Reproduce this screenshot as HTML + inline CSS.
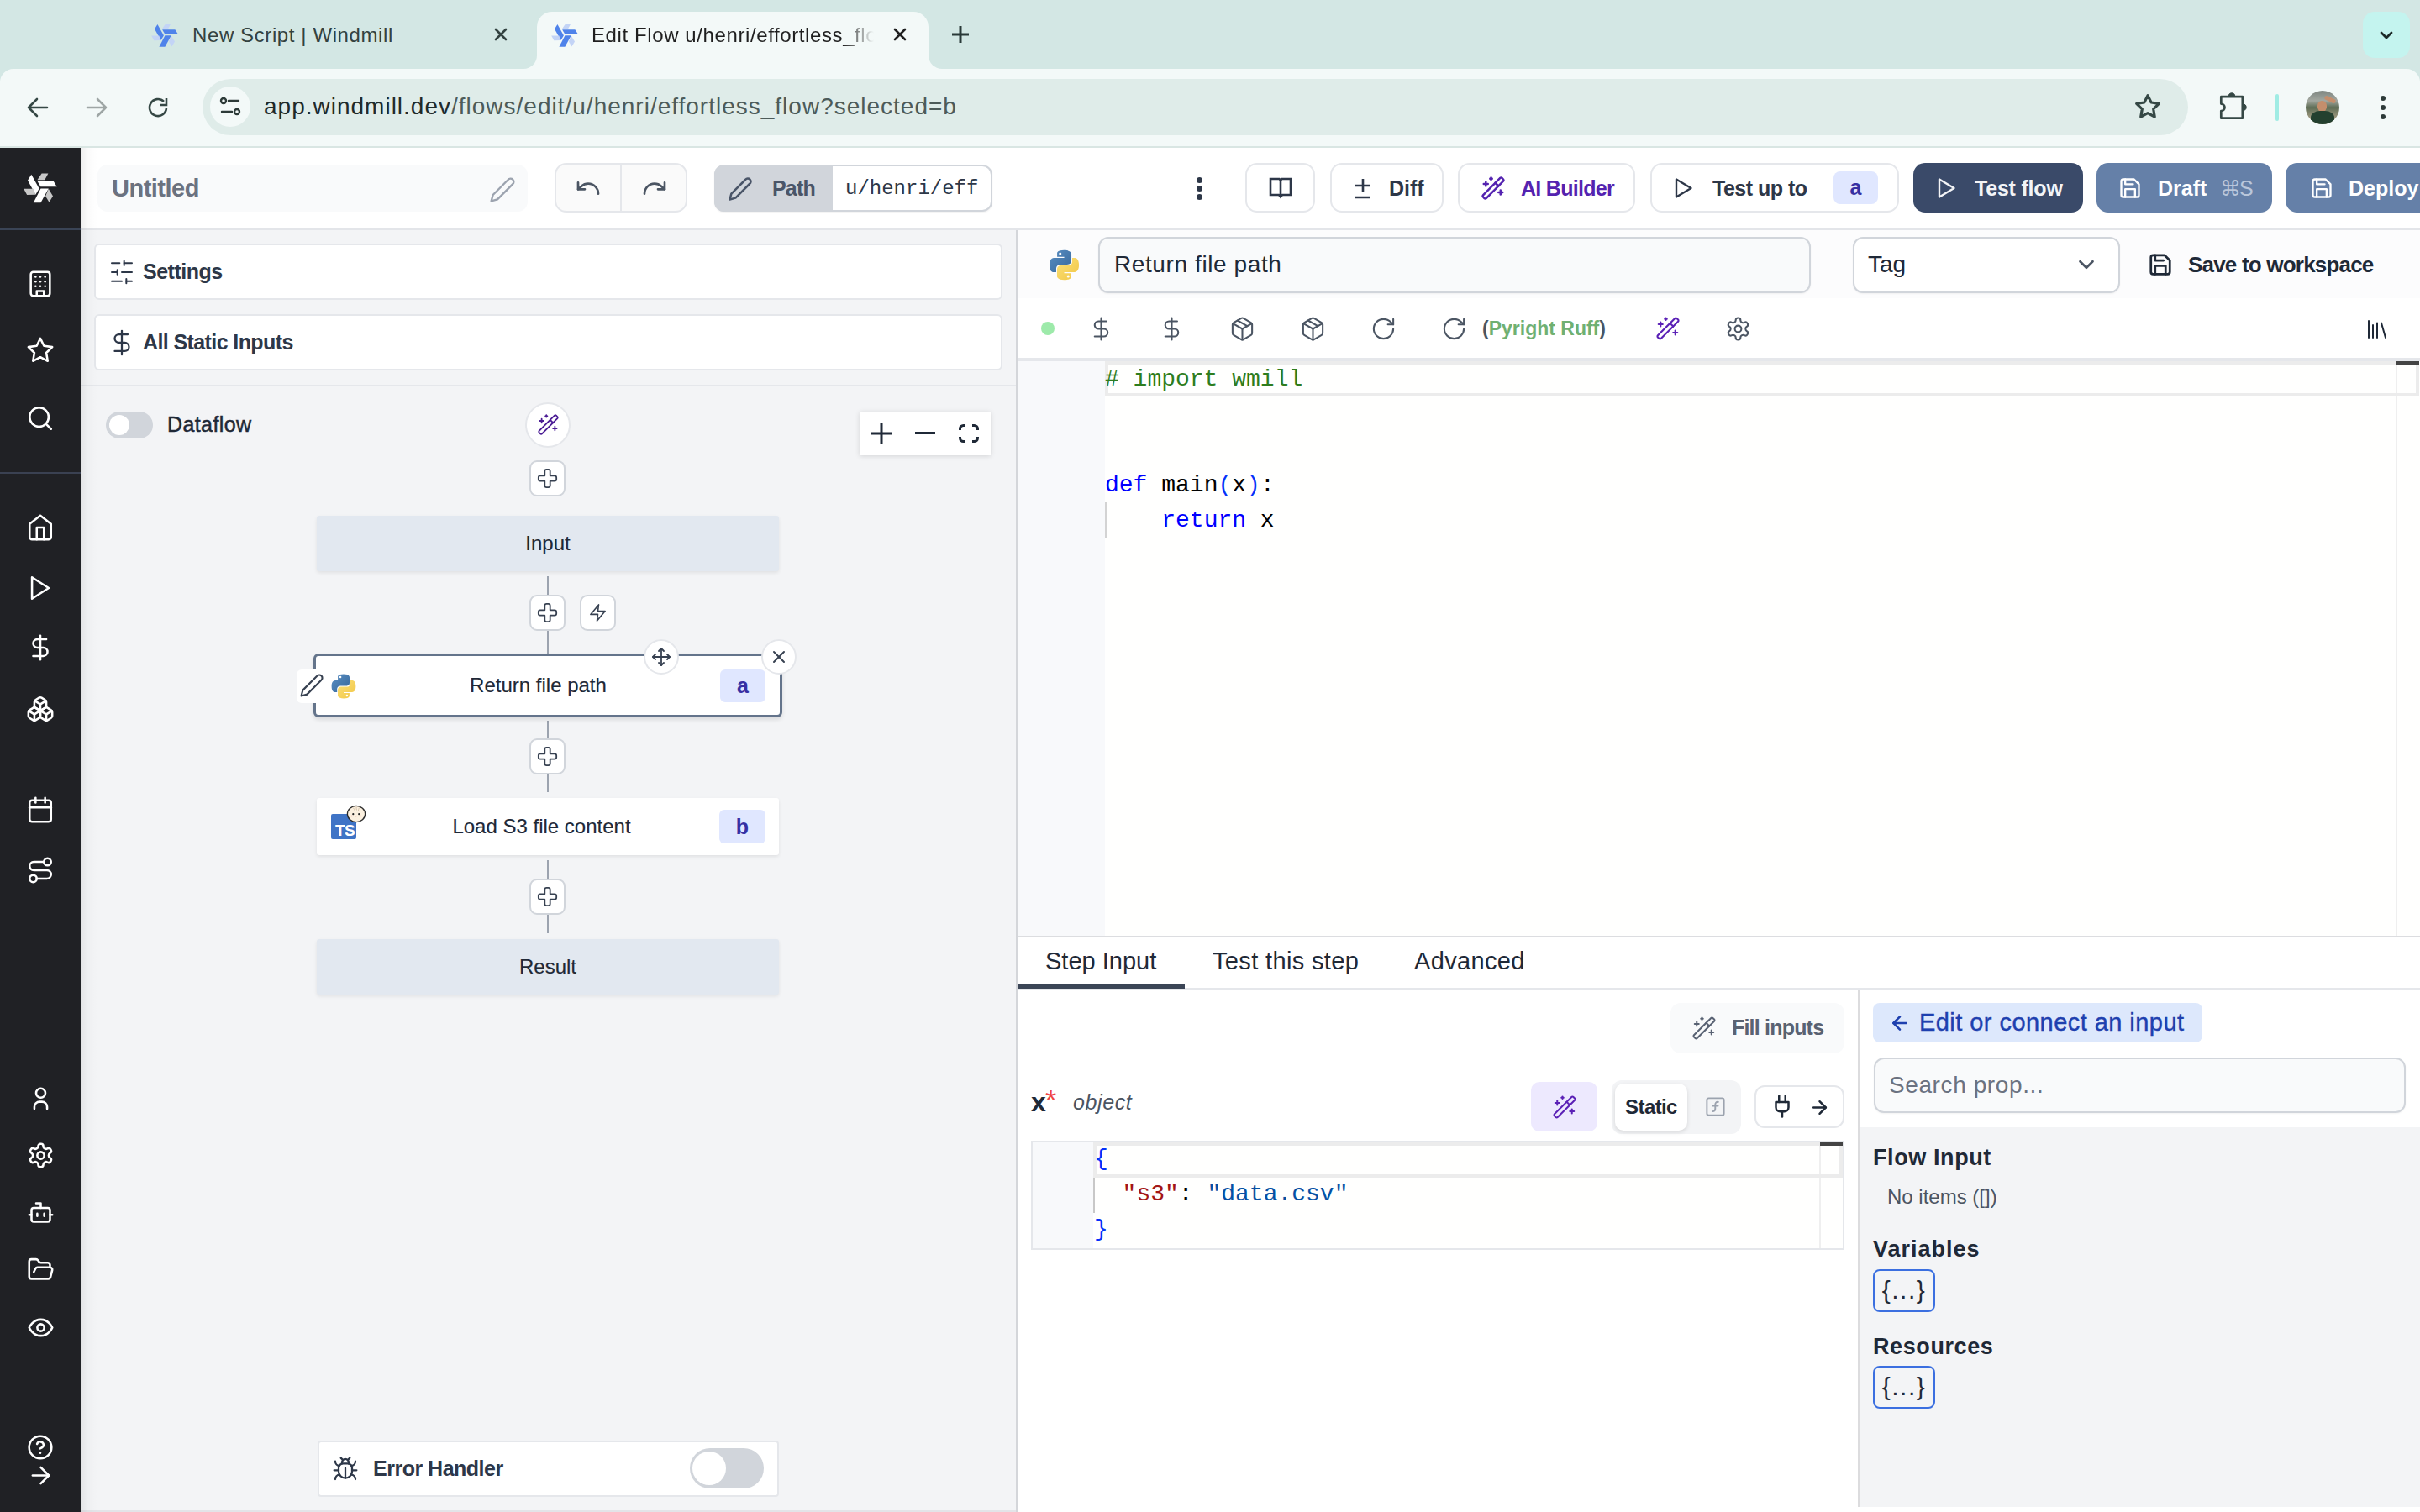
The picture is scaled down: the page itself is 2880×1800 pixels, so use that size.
<!DOCTYPE html>
<html><head><meta charset="utf-8">
<style>
*{box-sizing:border-box}
html,body{margin:0;padding:0}
body{width:2880px;height:1800px;overflow:hidden;position:relative;font-family:"Liberation Sans",sans-serif;background:#fff;color:#2d3748}
.a{position:absolute}
svg.i{fill:none;stroke:currentColor;stroke-width:2;stroke-linecap:round;stroke-linejoin:round;position:absolute;overflow:visible}
.t{position:absolute;white-space:nowrap}
.mono{font-family:"Liberation Mono",monospace}
@media (max-width:2000px){html{zoom:0.5}}
</style></head><body>
<svg width="0" height="0" style="position:absolute">
<defs>
<symbol id="wm" viewBox="0 0 32 32">
<polygon points="7.45,3 4,8.6 11.45,22.1 14.9,16.3" fill="#4f83ea"/>
<polygon points="13.1,9.2 28.4,9.2 31.8,14.6 16.2,14.6" fill="#4f83ea"/>
<polygon points="16.4,16.3 23.8,16.3 16.4,29.7 9.45,29.7" fill="#4f83ea"/>
<polygon points="17.3,1.9 23.5,1.9 20.2,8.1 13.1,8.1" fill="#c3d4f6"/>
<polygon points="0.2,16.5 9.3,16.5 11.45,22.1 3.3,22.3" fill="#c3d4f6"/>
<polygon points="23.8,16.6 28,23.5 24.4,29.4 20.9,23.5" fill="#c3d4f6"/>
</symbol>
<linearGradient id="pyb" x1="0" y1="0" x2="1" y2="1"><stop offset="0" stop-color="#5a8fc4"/><stop offset="1" stop-color="#36679a"/></linearGradient><linearGradient id="pyy" x1="0" y1="0" x2="1" y2="1"><stop offset="0" stop-color="#fbe07a"/><stop offset="1" stop-color="#f1c644"/></linearGradient>
<symbol id="py" viewBox="0 0 32 32">
<path d="M15.9 1.5c-7.3 0-6.8 3.2-6.8 3.2v3.3h6.9v1H6.3S1.6 8.5 1.6 15.9s4.1 7.1 4.1 7.1h2.5v-3.4s-.1-4.1 4-4.1h6.9s3.9.1 3.9-3.8V5.4s.6-3.9-7.1-3.9zm-3.8 2.2a1.25 1.25 0 1 1 0 2.5 1.25 1.25 0 0 1 0-2.5z" fill="url(#pyb)"/>
<path d="M16.1 30.5c7.3 0 6.8-3.2 6.8-3.2v-3.3h-6.9v-1h9.7s4.7.5 4.7-6.9-4.1-7.1-4.1-7.1h-2.5v3.4s.1 4.1-4 4.1h-6.9s-3.9-.1-3.9 3.8v6.3s-.6 3.9 7.1 3.9zm3.8-2.2a1.25 1.25 0 1 1 0-2.5 1.25 1.25 0 0 1 0 2.5z" fill="url(#pyy)"/>
</symbol>
</defs>
</svg>
<!-- CHROME TAB BAR -->
<div class="a" style="left:0;top:0;width:2880px;height:110px;background:#d3e7e4"></div>
<!-- active tab -->
<div class="a" style="left:623px;top:50px;width:32px;height:32px;background:#f3f9f8"></div>
<div class="a" style="left:607px;top:34px;width:32px;height:48px;background:#d3e7e4;border-radius:0 0 16px 0"></div>
<div class="a" style="left:1089px;top:50px;width:32px;height:32px;background:#f3f9f8"></div>
<div class="a" style="left:1105px;top:34px;width:32px;height:48px;background:#d3e7e4;border-radius:0 0 0 16px"></div>
<div class="a" style="left:639px;top:14px;width:466px;height:70px;background:#f3f9f8;border-radius:18px 18px 0 0"></div>
<svg class="a" style="left:180px;top:26px" width="32" height="32"><use href="#wm"/></svg>
<div class="t" style="left:229px;top:26px;font-size:24px;line-height:32px;color:#334240;letter-spacing:0.6px">New Script | Windmill</div>
<svg class="i" style="left:584px;top:29px;color:#334240;stroke-width:2.6" width="24" height="24" viewBox="0 0 24 24"><path d="M6 6 18 18M18 6 6 18"/></svg>
<svg class="a" style="left:656px;top:26px" width="32" height="32"><use href="#wm"/></svg>
<div class="t" style="left:704px;top:26px;font-size:24px;line-height:32px;color:#1f1f1f;width:336px;overflow:hidden;letter-spacing:0.6px;-webkit-mask-image:linear-gradient(90deg,#000 89%,transparent)">Edit Flow u/henri/effortless_flow</div>
<svg class="i" style="left:1059px;top:29px;color:#1f1f1f;stroke-width:2.6" width="24" height="24" viewBox="0 0 24 24"><path d="M6 6 18 18M18 6 6 18"/></svg>
<svg class="i" style="left:1129px;top:27px;color:#2a3a38;stroke-width:3;stroke-linecap:butt" width="28" height="28" viewBox="0 0 28 28"><path d="M14 4v20M4 14h20"/></svg>
<div class="a" style="left:2812px;top:14px;width:56px;height:55px;background:#c4f4ef;border-radius:14px"></div>
<svg class="i" style="left:2826px;top:28px;color:#1c2a28;stroke-width:2.8" width="28" height="28" viewBox="0 0 28 28"><path d="M8 11l6 6 6-6"/></svg>
<!-- TOOLBAR -->
<div class="a" style="left:0;top:82px;width:2880px;height:92px;background:#f3f9f8;border-radius:16px 16px 0 0"></div>
<div class="a" style="left:0;top:174px;width:2880px;height:2px;background:#d9e6e3"></div>
<svg class="i" style="left:30px;top:114px;color:#354845;stroke-width:2.6" width="28" height="28" viewBox="0 0 28 28"><path d="M26 14H4M14 4 4 14l10 10"/></svg>
<svg class="i" style="left:102px;top:114px;color:#9ea6a5;stroke-width:2.6" width="28" height="28" viewBox="0 0 28 28"><path d="M2 14h22M14 4l10 10-10 10"/></svg>
<svg class="i" style="left:174px;top:114px;color:#354845;stroke-width:2.6" width="28" height="28" viewBox="0 0 28 28"><path d="M24 14a10 10 0 1 1-3-7.1" stroke-linecap="butt"/><path d="M24 3v8h-8" stroke-linecap="butt" stroke-linejoin="miter"/></svg>
<div class="a" style="left:241px;top:94px;width:2363px;height:67px;background:#dfece9;border-radius:34px"></div>
<div class="a" style="left:250px;top:103px;width:48px;height:48px;background:#f3f9f8;border-radius:50%"></div>
<svg class="i" style="left:260px;top:113px;color:#2c3a38;stroke-width:2.4" width="28" height="28" viewBox="0 0 28 28"><circle cx="6" cy="7" r="3"/><path d="M12 7h12M4 20h12"/><circle cx="22" cy="20" r="3"/></svg>
<div class="t" style="left:314px;top:110px;font-size:28px;line-height:34px;color:#1f2a29;letter-spacing:1px">app.windmill.dev<span style="color:#4d5b59">/flows/edit/u/henri/effortless_flow?selected=b</span></div>
<svg class="i" style="left:2540px;top:111px;color:#354845;stroke-width:2.4" width="32" height="32" viewBox="0 0 24 24"><polygon points="12 2 15.09 8.26 22 9.27 17 14.14 18.18 21.02 12 17.77 5.82 21.02 7 14.14 2 9.27 8.91 8.26 12 2"/></svg>
<svg class="i" style="left:2638px;top:106px;color:#354845;stroke-width:2.7" width="40" height="40" viewBox="0 0 40 40"><path d="M5.3 9.2H30.8V34.7H5.3V26A4.2 4.2 0 0 0 5.3 17.6Z"/><path d="M14.3 8.5A3.7 3.7 0 0 1 21.7 8.5Z" fill="#354845" stroke-width="1"/><path d="M31.5 18A3.7 3.7 0 0 1 31.5 25.4Z" fill="#354845" stroke-width="1"/></svg>
<div class="a" style="left:2708px;top:112px;width:4px;height:32px;background:#a0ece4;border-radius:2px"></div>
<div class="a" style="left:2744px;top:108px;width:40px;height:40px;border-radius:50%;overflow:hidden;background:linear-gradient(180deg,#7d8580 0,#a3a8a0 30%,#5e6d55 50%,#c8b59a 100%)">
<div class="a" style="left:14px;top:12px;width:11px;height:13px;border-radius:45%;background:#c48e6c"></div>
<div class="a" style="left:6px;top:24px;width:28px;height:20px;border-radius:40% 40% 0 0;background:#23402f"></div>
<div class="a" style="left:22px;top:8px;width:14px;height:5px;border-radius:3px;background:#c48e6c;transform:rotate(25deg)"></div>
</div>
<div class="a" style="left:2833px;top:114px;width:6px;height:6px;border-radius:50%;background:#2c3a38"></div>
<div class="a" style="left:2833px;top:125px;width:6px;height:6px;border-radius:50%;background:#2c3a38"></div>
<div class="a" style="left:2833px;top:136px;width:6px;height:6px;border-radius:50%;background:#2c3a38"></div>

<!-- SIDEBAR -->
<div class="a" style="left:0;top:176px;width:96px;height:1624px;background:#202125"></div>
<svg class="a" style="left:28px;top:204px" width="40" height="40" viewBox="0 0 32 32">
<polygon points="7.45,3 4,8.6 11.45,22.1 14.9,16.3" fill="#fff"/>
<polygon points="13.1,9.2 28.4,9.2 31.8,14.6 16.2,14.6" fill="#fff"/>
<polygon points="16.4,16.3 23.8,16.3 16.4,29.7 9.45,29.7" fill="#fff"/>
<polygon points="17.3,1.9 23.5,1.9 20.2,8.1 13.1,8.1" fill="#c8c8c8"/>
<polygon points="0.2,16.5 9.3,16.5 11.45,22.1 3.3,22.3" fill="#c8c8c8"/>
<polygon points="23.8,16.6 28,23.5 24.4,29.4 20.9,23.5" fill="#c8c8c8"/>
</svg>
<div class="a" style="left:0;top:272px;width:96px;height:2px;background:#3a4456"></div>
<div class="a" style="left:0;top:562px;width:96px;height:2px;background:#3a4152"></div>

<!-- sidebar icons -->
<svg class="i" style="left:31.0px;top:321.0px;color:#fff;stroke-width:1.80" width="34" height="34" viewBox="0 0 24 24"><rect width="16" height="20" x="4" y="2" rx="2" ry="2"/><path d="M9 22v-4h6v4"/><path d="M8 6h.01"/><path d="M16 6h.01"/><path d="M12 6h.01"/><path d="M12 10h.01"/><path d="M12 14h.01"/><path d="M16 10h.01"/><path d="M16 14h.01"/><path d="M8 10h.01"/><path d="M8 14h.01"/></svg>
<svg class="i" style="left:31.0px;top:400.0px;color:#fff;stroke-width:1.80" width="34" height="34" viewBox="0 0 24 24"><polygon points="12 2 15.09 8.26 22 9.27 17 14.14 18.18 21.02 12 17.77 5.82 21.02 7 14.14 2 9.27 8.91 8.26 12 2"/></svg>
<svg class="i" style="left:31.0px;top:481.0px;color:#fff;stroke-width:1.80" width="34" height="34" viewBox="0 0 24 24"><circle cx="11" cy="11" r="8"/><path d="m21 21-4.3-4.3"/></svg>
<svg class="i" style="left:31.0px;top:611.0px;color:#fff;stroke-width:1.80" width="34" height="34" viewBox="0 0 24 24"><path d="m3 9 9-7 9 7v11a2 2 0 0 1-2 2H5a2 2 0 0 1-2-2z"/><polyline points="9 22 9 12 15 12 15 22"/></svg>
<svg class="i" style="left:31.0px;top:683.0px;color:#fff;stroke-width:1.80" width="34" height="34" viewBox="0 0 24 24"><polygon points="5 3 19 12 5 21 5 3"/></svg>
<svg class="i" style="left:31.0px;top:754.0px;color:#fff;stroke-width:1.80" width="34" height="34" viewBox="0 0 24 24"><line x1="12" x2="12" y1="2" y2="22"/><path d="M17 5H9.5a3.5 3.5 0 0 0 0 7h5a3.5 3.5 0 0 1 0 7H6"/></svg>
<svg class="i" style="left:31.0px;top:827.0px;color:#fff;stroke-width:1.80" width="34" height="34" viewBox="0 0 24 24"><path d="M2.97 12.92A2 2 0 0 0 2 14.63v3.24a2 2 0 0 0 .97 1.71l3 1.8a2 2 0 0 0 2.06 0L12 19v-5.5l-5-3-4.03 2.42Z"/><path d="m7 16.5-4.74-2.85"/><path d="m7 16.5 5-3"/><path d="M7 16.5v5.17"/><path d="M12 13.5V19l3.97 2.38a2 2 0 0 0 2.06 0l3-1.8a2 2 0 0 0 .97-1.71v-3.24a2 2 0 0 0-.97-1.71L17 10.5l-5 3Z"/><path d="m17 16.5-5-3"/><path d="m17 16.5 4.74-2.85"/><path d="M17 16.5v5.17"/><path d="M7.97 4.42A2 2 0 0 0 7 6.13v4.37l5 3 5-3V6.13a2 2 0 0 0-.97-1.71l-3-1.8a2 2 0 0 0-2.06 0l-3 1.8Z"/><path d="M12 8 7.26 5.15"/><path d="m12 8 4.74-2.85"/><path d="M12 13.5V8"/></svg>
<svg class="i" style="left:31.0px;top:947.0px;color:#fff;stroke-width:1.80" width="34" height="34" viewBox="0 0 24 24"><rect width="18" height="18" x="3" y="4" rx="2" ry="2"/><line x1="16" x2="16" y1="2" y2="6"/><line x1="8" x2="8" y1="2" y2="6"/><line x1="3" x2="21" y1="10" y2="10"/></svg>
<svg class="i" style="left:31.0px;top:1019.0px;color:#fff;stroke-width:1.80" width="34" height="34" viewBox="0 0 24 24"><circle cx="6" cy="19" r="3"/><path d="M9 19h8.5a3.5 3.5 0 0 0 0-7h-11a3.5 3.5 0 0 1 0-7H15"/><circle cx="18" cy="5" r="3"/></svg>
<svg class="i" style="left:31.5px;top:1290.5px;color:#fff;stroke-width:1.86" width="33" height="33" viewBox="0 0 24 24"><circle cx="12" cy="7.5" r="4"/><path d="M6.5 21v-1.5a4.5 4.5 0 0 1 4.5-4.5h2a4.5 4.5 0 0 1 4.5 4.5V21"/></svg>
<svg class="i" style="left:31.5px;top:1358.5px;color:#fff;stroke-width:1.86" width="33" height="33" viewBox="0 0 24 24"><path d="M12.22 2h-.44a2 2 0 0 0-2 2v.18a2 2 0 0 1-1 1.73l-.43.25a2 2 0 0 1-2 0l-.15-.08a2 2 0 0 0-2.73.73l-.22.38a2 2 0 0 0 .73 2.73l.15.1a2 2 0 0 1 1 1.72v.51a2 2 0 0 1-1 1.74l-.15.09a2 2 0 0 0-.73 2.73l.22.38a2 2 0 0 0 2.73.73l.15-.08a2 2 0 0 1 2 0l.43.25a2 2 0 0 1 1 1.73V20a2 2 0 0 0 2 2h.44a2 2 0 0 0 2-2v-.18a2 2 0 0 1 1-1.73l.43-.25a2 2 0 0 1 2 0l.15.08a2 2 0 0 0 2.730-.73l.22-.39a2 2 0 0 0-.73-2.73l-.15-.08a2 2 0 0 1-1-1.74v-.5a2 2 0 0 1 1-1.74l.15-.09a2 2 0 0 0 .73-2.73l-.22-.38a2 2 0 0 0-2.73-.73l-.15.08a2 2 0 0 1-2 0l-.43-.25a2 2 0 0 1-1-1.73V4a2 2 0 0 0-2-2z"/><circle cx="12" cy="12" r="3"/></svg>
<svg class="i" style="left:31.5px;top:1426.5px;color:#fff;stroke-width:1.86" width="33" height="33" viewBox="0 0 24 24"><path d="M12 8V4H8"/><rect width="16" height="12" x="4" y="8" rx="2"/><path d="M2 14h2"/><path d="M20 14h2"/><path d="M15 13v2"/><path d="M9 13v2"/></svg>
<svg class="i" style="left:31.5px;top:1494.5px;color:#fff;stroke-width:1.86" width="33" height="33" viewBox="0 0 24 24"><path d="m6 14 1.45-2.9A2 2 0 0 1 9.24 10H20a2 2 0 0 1 1.94 2.5l-1.55 6a2 2 0 0 1-1.94 1.5H4a2 2 0 0 1-2-2V5c0-1.1.9-2 2-2h3.930a2 2 0 0 1 1.66.9l.82 1.2a2 2 0 0 0 1.66.9H18a2 2 0 0 1 2 2v2"/></svg>
<svg class="i" style="left:31.5px;top:1563.5px;color:#fff;stroke-width:1.86" width="33" height="33" viewBox="0 0 24 24"><path d="M2 12s3-7 10-7 10 7 10 7-3 7-10 7-10-7-10-7Z"/><circle cx="12" cy="12" r="3"/></svg>
<svg class="i" style="left:32.0px;top:1707.0px;color:#fff;stroke-width:1.91" width="32" height="32" viewBox="0 0 24 24"><circle cx="12" cy="12" r="10"/><path d="M9.09 9a3 3 0 0 1 5.83 1c0 2-3 3-3 3"/><path d="M12 17h.01"/></svg>
<svg class="i" style="left:31.5px;top:1739.5px;color:#fff;stroke-width:1.86" width="33" height="33" viewBox="0 0 24 24"><path d="M5 12h14"/><path d="m12 5 7 7-7 7"/></svg>
<!-- HEADER -->
<div class="a" style="left:96px;top:176px;width:2784px;height:98px;background:#fff;border-bottom:2px solid #e3e5e9"></div>
<div class="a" style="left:116px;top:196px;width:512px;height:56px;background:#f9fafb;border-radius:12px"></div>
<div class="t" style="left:133px;top:206px;font-size:29px;line-height:36px;font-weight:bold;color:#6b7280;letter-spacing:-0.5px">Untitled</div>
<svg class="i" style="left:582px;top:210px;color:#9ca3af;stroke-width:1.8" width="32" height="32" viewBox="0 0 24 24"><path d="M17 3a2.85 2.83 0 1 1 4 4L7.5 20.5 2 22l1.5-5.5Z"/></svg>
<div class="a" style="left:660px;top:194px;width:158px;height:59px;background:#fafafa;border:2px solid #e5e7eb;border-radius:14px"></div>
<div class="a" style="left:738px;top:196px;width:2px;height:55px;background:#e5e7eb"></div>
<svg class="i" style="left:684px;top:208px;color:#4b5563;stroke-width:2" width="32" height="32" viewBox="0 0 24 24"><path d="M3 7v6h6"/><path d="M21 17a9 9 0 0 0-9-9 9 9 0 0 0-6 2.3L3 13"/></svg>
<svg class="i" style="left:763px;top:208px;color:#4b5563;stroke-width:2" width="32" height="32" viewBox="0 0 24 24"><path d="M21 7v6h-6"/><path d="M3 17a9 9 0 0 1 9-9 9 9 0 0 1 6 2.3l3 2.7"/></svg>
<div class="a" style="left:850px;top:196px;width:331px;height:56px;background:#fff;border:2px solid #d1d5db;border-radius:12px;box-shadow:0 1px 2px rgba(0,0,0,0.06)"></div>
<div class="a" style="left:850px;top:196px;width:141px;height:56px;background:#d1d5db;border-radius:12px 0 0 12px"></div>
<svg class="i" style="left:866px;top:210px;color:#4a5568;stroke-width:2" width="30" height="30" viewBox="0 0 24 24"><path d="M17 3a2.85 2.83 0 1 1 4 4L7.5 20.5 2 22l1.5-5.5Z"/></svg>
<div class="t" style="left:919px;top:206px;font-size:25px;line-height:36px;font-weight:bold;color:#4a5568;letter-spacing:-0.8px">Path</div>
<div class="t mono" style="left:1006px;top:206px;font-size:24px;line-height:36px;color:#2d3748;top:207px">u/henri/eff</div>
<div class="a" style="left:1424px;top:211px;width:7px;height:7px;border-radius:50%;background:#2d3748"></div>
<div class="a" style="left:1424px;top:221px;width:7px;height:7px;border-radius:50%;background:#2d3748"></div>
<div class="a" style="left:1424px;top:231px;width:7px;height:7px;border-radius:50%;background:#2d3748"></div>

<div class="a" style="left:1482px;top:194px;width:83px;height:59px;border:2px solid #e5e7eb;border-radius:14px;background:#fff"></div>
<svg class="i" style="left:1510px;top:210px;color:#2d3748;stroke-width:2.6;stroke-linecap:butt;stroke-linejoin:miter" width="28" height="28" viewBox="0 0 28 28"><path d="M2 3h10.5l1.5 1.5 1.5-1.5H26v19H16l-2 2.5-2-2.5H2z"/><path d="M14 4.5V23"/></svg>
<div class="a" style="left:1583px;top:194px;width:135px;height:59px;border:2px solid #e5e7eb;border-radius:14px;background:#fff"></div>
<svg class="i" style="left:1608px;top:210px;color:#2d3748;stroke-width:2.6;stroke-linecap:butt" width="28" height="28" viewBox="0 0 28 28"><path d="M14 3v16M5 11h18M5 25h18"/></svg>
<div class="t" style="left:1653px;top:206px;font-size:25px;line-height:36px;font-weight:bold;color:#2d3748">Diff</div>
<div class="a" style="left:1735px;top:194px;width:211px;height:59px;border:2px solid #e5e7eb;border-radius:14px;background:#fff"></div>
<svg class="i" style="left:1762px;top:209px;color:#5423b0;stroke-width:2" width="30" height="30" viewBox="0 0 24 24"><path d="m21.64 3.64-1.28-1.28a1.21 1.21 0 0 0-1.72 0L2.36 18.64a1.21 1.21 0 0 0 0 1.72l1.28 1.28a1.2 1.2 0 0 0 1.72 0L21.64 5.36a1.2 1.2 0 0 0 0-1.72"/><path d="m14 7 3 3"/><path d="M5 6v4"/><path d="M19 14v4"/><path d="M10 2v2"/><path d="M7 8H3"/><path d="M21 16h-4"/><path d="M11 3H9"/></svg>
<div class="t" style="left:1810px;top:206px;font-size:25px;line-height:36px;font-weight:bold;color:#5423b0;letter-spacing:-0.7px">AI Builder</div>
<div class="a" style="left:1964px;top:194px;width:296px;height:59px;border:2px solid #e5e7eb;border-radius:14px;background:#fff"></div>
<svg class="i" style="left:1990px;top:210px;color:#2d3748;stroke-width:2.4" width="28" height="28" viewBox="0 0 28 28"><path d="M5 3.5 22.5 14 5 24.5z"/></svg>
<div class="t" style="left:2038px;top:206px;font-size:25px;line-height:36px;font-weight:bold;color:#2d3748;letter-spacing:-0.5px">Test up to</div>
<div class="a" style="left:2182px;top:204px;width:53px;height:39px;background:#e0e7ff;border-radius:8px"></div>
<div class="t" style="left:2182px;top:205px;width:53px;text-align:center;font-size:25px;line-height:36px;font-weight:bold;color:#3730a3">a</div>
<div class="a" style="left:2277px;top:194px;width:202px;height:59px;background:#3a4a69;border-radius:14px"></div>
<svg class="i" style="left:2303px;top:210px;color:#f3f4f6;stroke-width:2.4" width="28" height="28" viewBox="0 0 28 28"><path d="M5 3.5 22.5 14 5 24.5z"/></svg>
<div class="t" style="left:2350px;top:206px;font-size:25px;line-height:36px;font-weight:bold;color:#f3f4f6;letter-spacing:-0.2px">Test flow</div>
<div class="a" style="left:2495px;top:194px;width:209px;height:59px;background:#6580a8;border-radius:14px"></div>
<svg class="i" style="left:2521px;top:210px;color:#fff;stroke-width:2" width="28" height="28" viewBox="0 0 24 24"><path d="M19 21H5a2 2 0 0 1-2-2V5a2 2 0 0 1 2-2h11l5 5v11a2 2 0 0 1-2 2z"/><polyline points="17 21 17 13 7 13 7 21"/><polyline points="7 3 7 8 15 8"/></svg>
<div class="t" style="left:2568px;top:206px;font-size:25px;line-height:36px;font-weight:bold;color:#fff">Draft</div>
<div class="t" style="left:2642px;top:206px;font-size:25px;line-height:36px;color:#b9c6da;letter-spacing:-2px">&#8984;S</div>
<div class="a" style="left:2720px;top:194px;width:200px;height:59px;background:#6580a8;border-radius:14px"></div>
<svg class="i" style="left:2749px;top:210px;color:#fff;stroke-width:2" width="28" height="28" viewBox="0 0 24 24"><path d="M19 21H5a2 2 0 0 1-2-2V5a2 2 0 0 1 2-2h11l5 5v11a2 2 0 0 1-2 2z"/><polyline points="17 21 17 13 7 13 7 21"/><polyline points="7 3 7 8 15 8"/></svg>
<div class="t" style="left:2795px;top:206px;font-size:25px;line-height:36px;font-weight:bold;color:#fff">Deploy</div>

<!-- LEFT PANEL -->
<div class="a" style="left:96px;top:274px;width:1113px;height:1526px;background:#f3f4f6"></div>
<div class="a" style="left:1209px;top:274px;width:2px;height:1526px;background:#d4d6da"></div>
<div class="a" style="left:96px;top:1798px;width:1113px;height:2px;background:#e3e4e8"></div>
<div class="a" style="left:112px;top:290px;width:1081px;height:67px;background:#fff;border:2px solid #e5e7eb;border-radius:6px"></div>
<svg class="i" style="left:129px;top:308px;color:#2d3748;stroke-width:1.5" width="32" height="32" viewBox="0 0 24 24"><line x1="21" x2="14" y1="4" y2="4"/><line x1="10" x2="3" y1="4" y2="4"/><line x1="21" x2="12" y1="12" y2="12"/><line x1="8" x2="3" y1="12" y2="12"/><line x1="21" x2="16" y1="20" y2="20"/><line x1="12" x2="3" y1="20" y2="20"/><line x1="14" x2="14" y1="2" y2="6"/><line x1="8" x2="8" y1="10" y2="14"/><line x1="16" x2="16" y1="18" y2="22"/></svg>
<div class="t" style="left:170px;top:305px;font-size:25px;line-height:36px;font-weight:bold;color:#2d3748;letter-spacing:-0.5px">Settings</div>
<div class="a" style="left:112px;top:374px;width:1081px;height:67px;background:#fff;border:2px solid #e5e7eb;border-radius:6px"></div>
<svg class="i" style="left:128px;top:391px;color:#2d3748;stroke-width:1.6" width="34" height="34" viewBox="0 0 24 24"><line x1="12" x2="12" y1="2" y2="22"/><path d="M17 5H9.5a3.5 3.5 0 0 0 0 7h5a3.5 3.5 0 0 1 0 7H6"/></svg>
<div class="t" style="left:170px;top:389px;font-size:25px;line-height:36px;font-weight:bold;color:#2d3748;letter-spacing:-0.6px">All Static Inputs</div>
<div class="a" style="left:96px;top:458px;width:1113px;height:2px;background:#e5e7eb"></div>
<!-- dataflow toggle -->
<div class="a" style="left:126px;top:490px;width:56px;height:32px;background:#d1d5db;border-radius:16px"></div>
<div class="a" style="left:130px;top:494px;width:24px;height:24px;background:#fff;border-radius:50%"></div>
<div class="t" style="left:199px;top:487px;font-size:25px;line-height:36px;color:#1f2937;-webkit-text-stroke:0.5px #1f2937;letter-spacing:0.4px">Dataflow</div>
<!-- zoom controls -->
<div class="a" style="left:1023px;top:490px;width:156px;height:52px;background:#fff;box-shadow:0 1px 6px rgba(0,0,0,0.13)"></div>
<svg class="i" style="left:1037px;top:504px;color:#1f2937;stroke-width:3;stroke-linecap:butt" width="24" height="24" viewBox="0 0 24 24"><path d="M12 0V24M0 12H24"/></svg>
<svg class="i" style="left:1089px;top:504px;color:#1f2937;stroke-width:3;stroke-linecap:butt" width="24" height="24" viewBox="0 0 24 24"><path d="M0 11.5H24"/></svg>
<svg class="i" style="left:1141px;top:505px;color:#1f2937;stroke-width:3;stroke-linecap:butt" width="24" height="22" viewBox="0 0 24 22"><path d="M1.5 7V5.5a4 4 0 0 1 4-4H8M16 1.5h2.5a4 4 0 0 1 4 4V7M22.5 15v1.5a4 4 0 0 1-4 4H16M8 20.5H5.5a4 4 0 0 1-4-4V15"/></svg>
<!-- graph -->
<div class="a" style="left:651px;top:686px;width:2px;height:22px;background:#9ca3af"></div>
<div class="a" style="left:651px;top:751px;width:2px;height:27px;background:#9ca3af"></div>
<div class="a" style="left:651px;top:858px;width:2px;height:21px;background:#9ca3af"></div>
<div class="a" style="left:651px;top:922px;width:2px;height:21px;background:#9ca3af"></div>
<div class="a" style="left:651px;top:1024px;width:2px;height:22px;background:#9ca3af"></div>
<div class="a" style="left:651px;top:1089px;width:2px;height:22px;background:#9ca3af"></div>
<div class="a" style="left:625px;top:479px;width:54px;height:54px;background:#fff;border:2px solid #e5e7eb;border-radius:50%"></div>
<svg class="i" style="left:639px;top:492px;color:#4c1d95;stroke-width:1.6" width="27" height="27" viewBox="0 0 24 24"><path d="m21.64 3.64-1.28-1.28a1.21 1.21 0 0 0-1.72 0L2.36 18.64a1.21 1.21 0 0 0 0 1.72l1.28 1.28a1.2 1.2 0 0 0 1.72 0L21.64 5.36a1.2 1.2 0 0 0 0-1.72"/><path d="m14 7 3 3"/><path d="M5 6v4"/><path d="M19 14v4"/><path d="M10 2v2"/><path d="M7 8H3"/><path d="M21 16h-4"/><path d="M11 3H9"/></svg>
<div class="a" style="left:630px;top:548px;width:43px;height:43px;background:#fff;border:2px solid #d1d5db;border-radius:9px"></div>
<svg class="i" style="left:628px;top:546px;color:#374151;stroke-width:1.7" width="47" height="47" viewBox="-10 -10 44 44"><path d="M11 2a2 2 0 0 0-2 2v5H4a2 2 0 0 0-2 2v2c0 1.1.9 2 2 2h5v5c0 1.1.9 2 2 2h2a2 2 0 0 0 2-2v-5h5a2 2 0 0 0 2-2v-2a2 2 0 0 0-2-2h-5V4a2 2 0 0 0-2-2h-2z"/></svg>

<div class="a" style="left:377px;top:614px;width:550px;height:66px;background:#e2e8f0;border-radius:3px;box-shadow:0 2px 4px rgba(0,0,0,0.08)"></div>
<div class="t" style="left:377px;top:629px;width:550px;text-align:center;font-size:24px;line-height:36px;color:#1f2937;-webkit-text-stroke:0.15px #1f2937">Input</div>
<div class="a" style="left:630px;top:708px;width:43px;height:43px;background:#fff;border:2px solid #d1d5db;border-radius:9px"></div>
<svg class="i" style="left:628px;top:706px;color:#374151;stroke-width:1.7" width="47" height="47" viewBox="-10 -10 44 44"><path d="M11 2a2 2 0 0 0-2 2v5H4a2 2 0 0 0-2 2v2c0 1.1.9 2 2 2h5v5c0 1.1.9 2 2 2h2a2 2 0 0 0 2-2v-5h5a2 2 0 0 0 2-2v-2a2 2 0 0 0-2-2h-5V4a2 2 0 0 0-2-2h-2z"/></svg>

<div class="a" style="left:690px;top:708px;width:43px;height:43px;background:#fff;border:2px solid #d1d5db;border-radius:9px"></div>
<svg class="i" style="left:700px;top:718px;color:#374151;stroke-width:1.7" width="23" height="23" viewBox="0 0 24 24"><polygon points="13 2 3 14 12 14 11 22 21 10 12 10 13 2"/></svg>
<!-- return file path node -->
<div class="a" style="left:373px;top:778px;width:558px;height:76px;background:#fff;border:3px solid #64748b;border-radius:6px;box-shadow:0 3px 5px rgba(0,0,0,0.1)"></div>
<div class="a" style="left:353px;top:797px;width:34px;height:40px;background:#fff;border-radius:6px 0 0 6px"></div>
<svg class="i" style="left:356px;top:801px;color:#374151;stroke-width:1.7" width="30" height="30" viewBox="0 0 24 24"><path d="M17 3a2.85 2.83 0 1 1 4 4L7.5 20.5 2 22l1.5-5.5Z"/></svg>
<svg class="a" style="left:393px;top:801px" width="32" height="32" viewBox="0 0 32 32"><use href="#py"/></svg>
<div class="t" style="left:373px;top:798px;width:535px;text-align:center;font-size:24px;line-height:36px;color:#1f2937;-webkit-text-stroke:0.15px #1f2937">Return file path</div>
<div class="a" style="left:857px;top:797px;width:54px;height:39px;background:#e0e7ff;border-radius:6px"></div>
<div class="t" style="left:857px;top:798px;width:54px;text-align:center;font-size:25px;line-height:36px;font-weight:bold;color:#3730a3">a</div>
<div class="a" style="left:766px;top:761px;width:42px;height:42px;background:#fff;border:2px solid #e5e7eb;border-radius:50%"></div>
<svg class="i" style="left:775px;top:770px;color:#374151;stroke-width:1.8" width="24" height="24" viewBox="0 0 24 24"><polyline points="5 9 2 12 5 15"/><polyline points="9 5 12 2 15 5"/><polyline points="15 19 12 22 9 19"/><polyline points="19 9 22 12 19 15"/><line x1="2" x2="22" y1="12" y2="12"/><line x1="12" x2="12" y1="2" y2="22"/></svg>
<div class="a" style="left:906px;top:761px;width:42px;height:42px;background:#fff;border:2px solid #e5e7eb;border-radius:50%"></div>
<svg class="i" style="left:915px;top:770px;color:#374151;stroke-width:2" width="24" height="24" viewBox="0 0 24 24"><path d="M18 6 6 18"/><path d="m6 6 12 12"/></svg>
<div class="a" style="left:630px;top:879px;width:43px;height:43px;background:#fff;border:2px solid #d1d5db;border-radius:9px"></div>
<svg class="i" style="left:628px;top:877px;color:#374151;stroke-width:1.7" width="47" height="47" viewBox="-10 -10 44 44"><path d="M11 2a2 2 0 0 0-2 2v5H4a2 2 0 0 0-2 2v2c0 1.1.9 2 2 2h5v5c0 1.1.9 2 2 2h2a2 2 0 0 0 2-2v-5h5a2 2 0 0 0 2-2v-2a2 2 0 0 0-2-2h-5V4a2 2 0 0 0-2-2h-2z"/></svg>

<div class="a" style="left:377px;top:950px;width:550px;height:68px;background:#fff;border-radius:3px;box-shadow:0 2px 4px rgba(0,0,0,0.08)"></div>
<div class="a" style="left:394px;top:969px;width:30px;height:30px;background:#3f74c6;border-radius:2px"></div>
<div class="t" style="left:399px;top:979px;font-size:19px;line-height:20px;font-weight:bold;color:#fff;letter-spacing:-0.5px">TS</div>
<svg class="a" style="left:412px;top:956px" width="24" height="24" viewBox="0 0 24 24"><ellipse cx="12" cy="13" rx="10.6" ry="9.6" fill="#fbf0df" stroke="#2b2b2b" stroke-width="1.3"/><path d="M8 5.5q2 1.5 2.5 4M12 4.5q0 2 .5 4M15.5 5.5q-1 2-1 3.5" fill="none" stroke="#cbb79e" stroke-width="0.8"/><circle cx="8.3" cy="13.2" r="1.1" fill="#222"/><circle cx="15.2" cy="13.2" r="1.1" fill="#222"/><path d="M10.6 15.5q1.2 1.6 2.4 0z" fill="#c0392b"/><ellipse cx="6.5" cy="15.5" rx="1.5" ry="0.8" fill="#f4a4a4"/><ellipse cx="17" cy="15.5" rx="1.5" ry="0.8" fill="#f4a4a4"/></svg>
<div class="t" style="left:377px;top:966px;width:535px;text-align:center;font-size:24px;line-height:36px;color:#1f2937;-webkit-text-stroke:0.15px #1f2937">Load S3 file content</div>
<div class="a" style="left:856px;top:964px;width:55px;height:40px;background:#e0e7ff;border-radius:6px"></div>
<div class="t" style="left:856px;top:966px;width:55px;text-align:center;font-size:25px;line-height:36px;font-weight:bold;color:#3730a3">b</div>
<div class="a" style="left:630px;top:1046px;width:43px;height:43px;background:#fff;border:2px solid #d1d5db;border-radius:9px"></div>
<svg class="i" style="left:628px;top:1044px;color:#374151;stroke-width:1.7" width="47" height="47" viewBox="-10 -10 44 44"><path d="M11 2a2 2 0 0 0-2 2v5H4a2 2 0 0 0-2 2v2c0 1.1.9 2 2 2h5v5c0 1.1.9 2 2 2h2a2 2 0 0 0 2-2v-5h5a2 2 0 0 0 2-2v-2a2 2 0 0 0-2-2h-5V4a2 2 0 0 0-2-2h-2z"/></svg>

<div class="a" style="left:377px;top:1118px;width:550px;height:66px;background:#e2e8f0;border-radius:3px;box-shadow:0 2px 4px rgba(0,0,0,0.08)"></div>
<div class="t" style="left:377px;top:1133px;width:550px;text-align:center;font-size:24px;line-height:36px;color:#1f2937;-webkit-text-stroke:0.15px #1f2937">Result</div>
<!-- error handler -->
<div class="a" style="left:378px;top:1715px;width:549px;height:67px;background:#fff;border:2px solid #e5e7eb;border-radius:4px"></div>
<svg class="i" style="left:395px;top:1733px;color:#2d3748;stroke-width:1.7" width="32" height="32" viewBox="0 0 24 24"><path d="m8 2 1.88 1.88"/><path d="M14.12 3.88 16 2"/><path d="M9 7.13v-1a3.003 3.003 0 1 1 6 0v1"/><path d="M12 20c-3.3 0-6-2.7-6-6v-3a4 4 0 0 1 4-4h4a4 4 0 0 1 4 4v3c0 3.3-2.7 6-6 6"/><path d="M12 20v-9"/><path d="M6.53 9C4.6 8.8 3 7.1 3 5"/><path d="M6 13H2"/><path d="M3 21c0-2.1 1.7-3.9 3.8-4"/><path d="M20.97 5c0 2.1-1.6 3.8-3.5 4"/><path d="M22 13h-4"/><path d="M17.2 17c2.1.1 3.8 1.9 3.8 4"/></svg>
<div class="t" style="left:444px;top:1730px;font-size:25px;line-height:36px;font-weight:bold;color:#2d3748;letter-spacing:-0.5px">Error Handler</div>
<div class="a" style="left:821px;top:1724px;width:88px;height:48px;background:#d1d5db;border-radius:24px"></div>
<div class="a" style="left:824px;top:1728px;width:40px;height:40px;background:#fff;border-radius:50%"></div>

<!-- RIGHT PANEL -->
<div class="a" style="left:1211px;top:274px;width:1669px;height:81px;background:#fcfcfd"></div>
<svg class="a" style="left:1247px;top:296px" width="39" height="39" viewBox="0 0 32 32"><use href="#py"/></svg>
<div class="a" style="left:1307px;top:282px;width:848px;height:67px;background:#f9fafb;border:2px solid #d1d5db;border-radius:12px;box-shadow:0 1px 2px rgba(0,0,0,0.05)"></div>
<div class="t" style="left:1326px;top:297px;font-size:28px;line-height:36px;color:#1f2937;letter-spacing:0.6px">Return file path</div>
<div class="a" style="left:2205px;top:282px;width:318px;height:67px;background:#fff;border:2px solid #d1d5db;border-radius:12px;box-shadow:0 1px 2px rgba(0,0,0,0.05)"></div>
<div class="t" style="left:2223px;top:297px;font-size:28px;line-height:36px;color:#1f2937">Tag</div>
<svg class="i" style="left:2468px;top:300px;color:#4b5563;stroke-width:2.2" width="30" height="30" viewBox="0 0 24 24"><path d="m6 9 6 6 6-6"/></svg>
<svg class="i" style="left:2556px;top:300px;color:#1f2937;stroke-width:2.2" width="30" height="30" viewBox="0 0 24 24"><path d="M19 21H5a2 2 0 0 1-2-2V5a2 2 0 0 1 2-2h11l5 5v11a2 2 0 0 1-2 2z"/><polyline points="17 21 17 13 7 13 7 21"/><polyline points="7 3 7 8 15 8"/></svg>
<div class="t" style="left:2604px;top:297px;font-size:26px;line-height:36px;font-weight:bold;color:#1f2937;letter-spacing:-0.8px">Save to workspace</div>
<!-- editor toolbar -->
<div class="a" style="left:1239px;top:383px;width:16px;height:16px;background:#9deaaa;border-radius:50%"></div>
<svg class="i" style="left:1295px;top:376px;color:#4b5563;stroke-width:1.6" width="31" height="31" viewBox="0 0 24 24"><line x1="12" x2="12" y1="2" y2="22"/><path d="M17 5H9.5a3.5 3.5 0 0 0 0 7h5a3.5 3.5 0 0 1 0 7H6"/></svg>
<svg class="i" style="left:1379px;top:376px;color:#4b5563;stroke-width:1.6" width="31" height="31" viewBox="0 0 24 24"><line x1="12" x2="12" y1="2" y2="22"/><path d="M17 5H9.5a3.5 3.5 0 0 0 0 7h5a3.5 3.5 0 0 1 0 7H6"/></svg>
<svg class="i" style="left:1463px;top:376px;color:#4b5563;stroke-width:1.6" width="31" height="31" viewBox="0 0 24 24"><path d="m7.5 4.27 9 5.15"/><path d="M21 8a2 2 0 0 0-1-1.73l-7-4a2 2 0 0 0-2 0l-7 4A2 2 0 0 0 3 8v8a2 2 0 0 0 1 1.73l7 4a2 2 0 0 0 2 0l7-4A2 2 0 0 0 21 16Z"/><path d="m3.3 7 8.7 5 8.7-5"/><path d="M12 22V12"/></svg>
<svg class="i" style="left:1547px;top:376px;color:#4b5563;stroke-width:1.6" width="31" height="31" viewBox="0 0 24 24"><path d="m7.5 4.27 9 5.15"/><path d="M21 8a2 2 0 0 0-1-1.73l-7-4a2 2 0 0 0-2 0l-7 4A2 2 0 0 0 3 8v8a2 2 0 0 0 1 1.73l7 4a2 2 0 0 0 2 0l7-4A2 2 0 0 0 21 16Z"/><path d="m3.3 7 8.7 5 8.7-5"/><path d="M12 22V12"/></svg>
<svg class="i" style="left:1631px;top:376px;color:#4b5563;stroke-width:1.6" width="31" height="31" viewBox="0 0 24 24"><path d="M21 12a9 9 0 1 1-9-9c2.52 0 4.93 1 6.74 2.74L21 8"/><path d="M21 3v5h-5"/></svg>
<svg class="i" style="left:1715px;top:376px;color:#4b5563;stroke-width:1.6" width="31" height="31" viewBox="0 0 24 24"><path d="M21 12a9 9 0 1 1-9-9c2.52 0 4.93 1 6.74 2.74L21 8"/><path d="M21 3v5h-5"/></svg>
<div class="t" style="left:1764px;top:374px;font-size:23px;line-height:34px;font-weight:bold;color:#4b5563">(<span style="color:#6fb072">Pyright Ruff</span>)</div>
<svg class="i" style="left:1970px;top:376px;color:#5b21b6;stroke-width:1.7" width="30" height="30" viewBox="0 0 24 24"><path d="m21.64 3.64-1.28-1.28a1.21 1.21 0 0 0-1.72 0L2.36 18.64a1.21 1.21 0 0 0 0 1.72l1.28 1.28a1.2 1.2 0 0 0 1.72 0L21.64 5.36a1.2 1.2 0 0 0 0-1.72"/><path d="m14 7 3 3"/><path d="M5 6v4"/><path d="M19 14v4"/><path d="M10 2v2"/><path d="M7 8H3"/><path d="M21 16h-4"/><path d="M11 3H9"/></svg>
<svg class="i" style="left:2053px;top:376px;color:#4b5563;stroke-width:1.6" width="31" height="31" viewBox="0 0 24 24"><path d="M12.22 2h-.44a2 2 0 0 0-2 2v.18a2 2 0 0 1-1 1.73l-.43.25a2 2 0 0 1-2 0l-.15-.08a2 2 0 0 0-2.73.73l-.22.38a2 2 0 0 0 .73 2.73l.15.1a2 2 0 0 1 1 1.72v.51a2 2 0 0 1-1 1.74l-.15.09a2 2 0 0 0-.73 2.73l.22.38a2 2 0 0 0 2.73.73l.15-.08a2 2 0 0 1 2 0l.43.25a2 2 0 0 1 1 1.73V20a2 2 0 0 0 2 2h.44a2 2 0 0 0 2-2v-.18a2 2 0 0 1 1-1.73l.43-.25a2 2 0 0 1 2 0l.15.08a2 2 0 0 0 2.73-.73l.22-.39a2 2 0 0 0-.73-2.73l-.15-.08a2 2 0 0 1-1-1.74v-.5a2 2 0 0 1 1-1.74l.15-.09a2 2 0 0 0 .73-2.73l-.22-.38a2 2 0 0 0-2.73-.73l-.15.08a2 2 0 0 1-2 0l-.43-.25a2 2 0 0 1-1-1.73V4a2 2 0 0 0-2-2z"/><circle cx="12" cy="12" r="3"/></svg>
<svg class="i" style="left:2814px;top:377px;color:#1f2937;stroke-width:1.6" width="30" height="30" viewBox="0 0 24 24"><path d="m16 6 4 14"/><path d="M12 6v14"/><path d="M8 8v12"/><path d="M4 4v16"/></svg>
<!-- EDITOR -->
<div class="a" style="left:1211px;top:426px;width:1669px;height:4px;background:#e5e7eb"></div>
<div class="a" style="left:1211px;top:430px;width:1669px;height:684px;background:#fffffe"></div>
<div class="a" style="left:1211px;top:430px;width:104px;height:684px;background:#f8f9fb"></div>
<div class="a" style="left:2851px;top:430px;width:2px;height:684px;background:#efefef"></div>
<div class="a" style="left:1315px;top:430px;width:1564px;height:42px;border:4px solid #ececec"></div>
<div class="a" style="left:2852px;top:430px;width:27px;height:4px;background:#444"></div>
<div class="t mono" style="left:1315px;top:431px;font-size:28px;line-height:42px;color:#000">
<div style="color:#2e7d1e">#&nbsp;import&nbsp;wmill</div>
<div>&nbsp;</div><div>&nbsp;</div>
<div><span style="color:#0000ff">def</span>&nbsp;main<span style="color:#0431fa">(</span>x<span style="color:#0431fa">)</span>:</div>
<div>&nbsp;&nbsp;&nbsp;&nbsp;<span style="color:#0000ff">return</span>&nbsp;x</div>
</div>
<div class="a" style="left:1315px;top:598px;width:2px;height:42px;background:#d3d3d3"></div>

<!-- BOTTOM TABS -->
<div class="a" style="left:1211px;top:1114px;width:1669px;height:2px;background:#dcdde0"></div>
<div class="a" style="left:1211px;top:1116px;width:1669px;height:684px;background:#fff"></div>
<div class="t" style="left:1244px;top:1126px;font-size:29px;line-height:36px;color:#1f2937">Step Input</div>
<div class="t" style="left:1443px;top:1126px;font-size:29px;line-height:36px;color:#1f2937;letter-spacing:0.35px">Test this step</div>
<div class="t" style="left:1683px;top:1126px;font-size:29px;line-height:36px;color:#1f2937;letter-spacing:0.35px">Advanced</div>
<div class="a" style="left:1211px;top:1176px;width:1669px;height:2px;background:#e5e7eb"></div>
<div class="a" style="left:1211px;top:1172px;width:199px;height:5px;background:#3b4556"></div>
<!-- step input -->
<div class="a" style="left:2211px;top:1178px;width:2px;height:616px;background:#dcdcde"></div>
<div class="a" style="left:1988px;top:1194px;width:207px;height:60px;background:#f9fafb;border-radius:12px"></div>
<svg class="i" style="left:2013px;top:1209px;color:#596273;stroke-width:1.6" width="30" height="30" viewBox="0 0 24 24"><path d="m21.64 3.64-1.28-1.28a1.21 1.21 0 0 0-1.72 0L2.36 18.64a1.21 1.21 0 0 0 0 1.72l1.28 1.28a1.2 1.2 0 0 0 1.72 0L21.64 5.36a1.2 1.2 0 0 0 0-1.72"/><path d="m14 7 3 3"/><path d="M5 6v4"/><path d="M19 14v4"/><path d="M10 2v2"/><path d="M7 8H3"/><path d="M21 16h-4"/><path d="M11 3H9"/></svg>
<div class="t" style="left:2061px;top:1205px;font-size:25px;line-height:36px;font-weight:bold;color:#596273;letter-spacing:-0.8px">Fill inputs</div>
<div class="t" style="left:1227px;top:1294px;font-size:32px;line-height:36px;font-weight:bold;color:#1f2937">x</div>
<div class="t" style="left:1244px;top:1291px;font-size:34px;line-height:36px;color:#ef4444">*</div>
<div class="t" style="left:1277px;top:1294px;font-size:25px;line-height:36px;font-style:italic;color:#4b5563;letter-spacing:0.6px">object</div>
<div class="a" style="left:1822px;top:1288px;width:79px;height:59px;background:#ede9fe;border-radius:10px"></div>
<svg class="i" style="left:1847px;top:1303px;color:#5b21b6;stroke-width:1.6" width="30" height="30" viewBox="0 0 24 24"><path d="m21.64 3.64-1.28-1.28a1.21 1.21 0 0 0-1.72 0L2.36 18.64a1.21 1.21 0 0 0 0 1.72l1.28 1.28a1.2 1.2 0 0 0 1.72 0L21.64 5.36a1.2 1.2 0 0 0 0-1.72"/><path d="m14 7 3 3"/><path d="M5 6v4"/><path d="M19 14v4"/><path d="M10 2v2"/><path d="M7 8H3"/><path d="M21 16h-4"/><path d="M11 3H9"/></svg>
<div class="a" style="left:1918px;top:1286px;width:154px;height:64px;background:#f3f4f6;border-radius:12px"></div>
<div class="a" style="left:1922px;top:1290px;width:86px;height:56px;background:#fff;border-radius:10px;box-shadow:0 2px 5px rgba(0,0,0,0.12)"></div>
<div class="t" style="left:1922px;top:1300px;width:86px;text-align:center;font-size:24px;line-height:36px;font-weight:bold;color:#1f2937;letter-spacing:-0.6px">Static</div>
<svg class="i" style="left:2028px;top:1304px;color:#9ca3af;stroke-width:1.7" width="27" height="27" viewBox="0 0 24 24"><rect width="18" height="18" x="3" y="3" rx="2" ry="2"/><path d="M9 17c2 0 2.8-1 2.8-2.8V10c0-2 1-3.3 3.2-3"/><path d="M9 11.2h5.7"/></svg>
<div class="a" style="left:2088px;top:1292px;width:107px;height:51px;background:#fff;border:2px solid #e5e7eb;border-radius:12px"></div>
<svg class="i" style="left:2106px;top:1302px;color:#1f2937;stroke-width:2" width="30" height="30" viewBox="0 0 24 24"><path d="M12 22v-5"/><path d="M9 8V2"/><path d="M15 8V2"/><path d="M18 8v5a4 4 0 0 1-4 4h-4a4 4 0 0 1-4-4V8Z"/></svg>
<svg class="i" style="left:2153px;top:1306px;color:#1f2937;stroke-width:2.4" width="25" height="25" viewBox="0 0 24 24"><path d="M5 12h14"/><path d="m12 5 7 7-7 7"/></svg>
<!-- json editor -->
<div class="a" style="left:1227px;top:1358px;width:968px;height:130px;background:#fffffe;border:2px solid #e5e7eb"></div>
<div class="a" style="left:1229px;top:1360px;width:72px;height:126px;background:#f8f9fb"></div>
<div class="a" style="left:2165px;top:1360px;width:2px;height:126px;background:#efefef"></div>
<div class="a" style="left:1301px;top:1360px;width:892px;height:42px;border:4px solid #ececec"></div>
<div class="a" style="left:2166px;top:1360px;width:27px;height:4px;background:#444"></div>
<div class="a" style="left:1301px;top:1402px;width:2px;height:42px;background:#c8c8c8"></div>
<div class="t mono" style="left:1302px;top:1359px;font-size:28px;line-height:42px;color:#000">
<div style="color:#0431fa">{</div>
<div>&nbsp;&nbsp;<span style="color:#a31515">"s3"</span>:&nbsp;<span style="color:#0451a5">"data.csv"</span></div>
<div style="color:#0431fa">}</div>
</div>
<!-- connect panel -->
<div class="a" style="left:2213px;top:1342px;width:667px;height:452px;background:#f3f4f6"></div>
<div class="a" style="left:2229px;top:1194px;width:392px;height:47px;background:#dde8fc;border-radius:8px"></div>
<svg class="i" style="left:2248px;top:1205px;color:#1e40af;stroke-width:2.4" width="26" height="26" viewBox="0 0 24 24"><path d="m12 19-7-7 7-7"/><path d="M19 12H5"/></svg>
<div class="t" style="left:2284px;top:1199px;font-size:29px;line-height:36px;color:#1e40af;-webkit-text-stroke:0.4px #1e40af;letter-spacing:0.45px">Edit or connect an input</div>
<div class="a" style="left:2230px;top:1259px;width:633px;height:66px;background:#f9fafb;border:2px solid #d1d5db;border-radius:12px;box-shadow:0 1px 2px rgba(0,0,0,0.05)"></div>
<div class="t" style="left:2248px;top:1274px;font-size:28px;line-height:36px;color:#6b7280;letter-spacing:0.6px">Search prop...</div>
<div class="t" style="left:2229px;top:1360px;font-size:27px;line-height:36px;font-weight:bold;color:#1f2937;letter-spacing:0.6px">Flow Input</div>
<div class="t" style="left:2246px;top:1407px;font-size:24px;line-height:36px;color:#4b5563">No items ([])</div>
<div class="t" style="left:2229px;top:1469px;font-size:27px;line-height:36px;font-weight:bold;color:#1f2937;letter-spacing:1px">Variables</div>
<div class="a" style="left:2229px;top:1511px;width:74px;height:51px;border:2px solid #3b6fe0;border-radius:8px"></div>
<div class="t" style="left:2229px;top:1518px;width:74px;text-align:center;font-size:30px;line-height:36px;color:#1f2937;letter-spacing:1.5px">{...}</div>
<div class="t" style="left:2229px;top:1585px;font-size:27px;line-height:36px;font-weight:bold;color:#1f2937;letter-spacing:0.6px">Resources</div>
<div class="a" style="left:2229px;top:1626px;width:74px;height:51px;border:2px solid #3b6fe0;border-radius:8px"></div>
<div class="t" style="left:2229px;top:1633px;width:74px;text-align:center;font-size:30px;line-height:36px;color:#1f2937;letter-spacing:1.5px">{...}</div>

<div class="a" style="left:96px;top:176px;width:20px;height:1624px;background:linear-gradient(90deg,rgba(0,0,0,0.07),rgba(0,0,0,0.02) 40%,transparent)"></div>
</body></html>
